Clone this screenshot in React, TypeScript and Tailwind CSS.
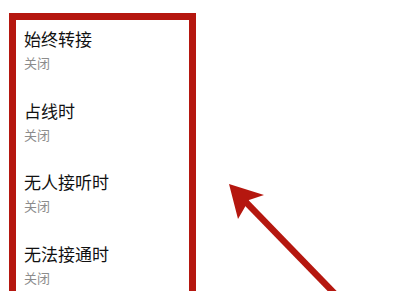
import React from "react";

const items = ["始终转接", "占线时", "无人接听时", "无法接通时"];

export default function App() {
  return (
    <div
      className="relative w-[408px] h-[291px] overflow-hidden bg-white"
      style={{ fontFamily: '"Noto Sans CJK SC", "Noto Sans", sans-serif' }}
    >
      <div className="ml-[9px] mt-[13px] w-[187px] h-[320px] border-[7px] border-[#b5170f]">
        <div className="flex flex-col gap-[26.5px] pl-[8px] pt-[7px]">
          {items.map((t) => (
            <div key={t} className="flex flex-col gap-[3px]">
              <div className="text-[17px] leading-[24px] text-[#111111]">{t}</div>
              <div className="text-[13px] leading-[18px] text-[#8c8c8c]">关闭</div>
            </div>
          ))}
        </div>
      </div>
      <svg className="absolute left-0 top-0" width="408" height="291" viewBox="0 0 408 291">
        <line x1="240" y1="196" x2="336" y2="295" stroke="#b5170f" strokeWidth="6.5" />
        <polygon points="229,184 264,195 249,200 238,219" fill="#b5170f" />
      </svg>
    </div>
  );
}
